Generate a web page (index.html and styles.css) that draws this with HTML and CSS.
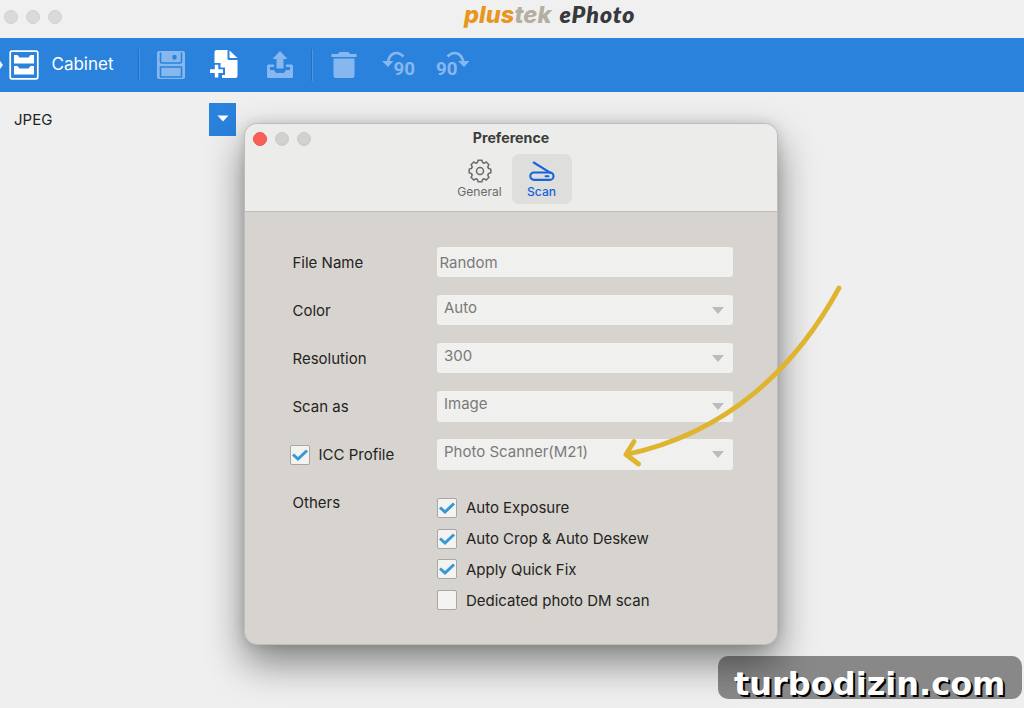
FILE: index.html
```html
<!DOCTYPE html>
<html lang="en">
<head>
<meta charset="utf-8">
<title>plustek ePhoto</title>
<link rel="stylesheet" href="styles.css">
</head>
<body>
<div class="app">
  <header class="titlebar">
    <div class="lights"><i></i><i></i><i></i></div>
    <div class="logo"><span class="plus">plus</span><span class="tek">tek</span><span class="ephoto">ePhoto</span></div>
  </header>
  <nav class="toolbar">
    <svg class="nub" width="3" height="10" viewBox="0 0 3 10"><path d="M0 1l3 4-3 4z" fill="#fff"/></svg>
    <svg class="ic cabinet" width="30" height="30" viewBox="0 0 30 30"><rect x="1.200" y="1.200" width="27.600" height="27.600" rx="1.800" fill="none" stroke="#fff" stroke-width="1.700"/><path d="M5 5h3.500l2 2.500h9l2-2.500H25v8.500H5zM5 16h3.500l2 2.500h9l2-2.500H25v8.500H5z" fill="#fff"/></svg>
    <span class="cabinet-label">Cabinet</span>
    <span class="divider d1"></span>
    <svg class="ic dim save" width="28" height="28" viewBox="0 0 28 28"><rect width="28" height="28" rx="2"/><path d="M3.500 1.500v9q0 1.500 1.500 1.500h18q1.500 0 1.500-1.500v-9M3.500 26V16h21v10z" fill="none" stroke="#2a82dd" stroke-width="1.600"/><rect x="15.500" y="4" width="4" height="4.500" rx="1.200" fill="#2a82dd"/></svg>
    <svg class="ic add" width="30" height="31" viewBox="0 0 30 31"><path d="M8 1h10.500v8.500q0 1.500 1.500 1.500h8.500V27q0 2-2 2H13v-3h3v-7.500h-4.500V14H5.500V3Q5.500 1 8 1zM20.500 1.500L28.500 9h-8z" fill="#fff"/><path d="M5.800 15.700h3.500v4.600H14v3.600H9.300v4.500H5.800v-4.500H1v-3.600h4.800z" fill="#fff"/></svg>
    <svg class="ic dim upload" width="28" height="28" viewBox="0 0 28 28"><path d="M14 0l7.500 8h-4v9.500h-7V8h-4z"/><path d="M2.500 13.500H8v2.500H4v3h4l2 3h8l2-3h4v-3h-4v-2.500h5.500q1.500 0 1.500 1.500v10.500q0 1.500-1.500 1.500h-23Q1 27 1 25.500V15q0-1.500 1.500-1.500z"/></svg>
    <span class="divider d2"></span>
    <svg class="ic dim trash" width="26" height="27" viewBox="0 0 26 27"><path d="M7 2l1.500-2h9L19 2h6.500v3H.5V2zM2.500 6.500h21v17q0 2.500-2.500 2.500H5q-2.500 0-2.500-2.500z"/></svg>
    <svg class="ic dim rot-left" width="34" height="26" viewBox="0 0 34 26"><path d="M6 12C7 2 15-1 21.500 5.500" class="arc"/><path d="M0 10h11.500L6 16z"/><text x="11.500" y="23.500" textLength="21.500" lengthAdjust="spacingAndGlyphs">90</text></svg>
    <svg class="ic dim rot-right" width="34" height="26" viewBox="0 0 34 26"><path d="M11.500 5.500C18-1 26 2 27.500 12" class="arc"/><path d="M22 10h11.500L28 16z"/><text x="0" y="23.500" textLength="21.500" lengthAdjust="spacingAndGlyphs">90</text></svg>
  </nav>
  <main class="workspace">
    <div class="format"><span>JPEG</span><button class="drop" aria-label="Format"><svg width="12" height="7" viewBox="0 0 12 7"><path d="M.5.5h11L6 6.500z" fill="#fff"/></svg></button></div>
  </main>

  <section class="dialog">
    <header class="dialog-head">
      <div class="lights dialog-lights"><i class="red"></i><i></i><i></i></div>
      <h1>Preference</h1>
      <div class="tabs">
        <div class="tab">
          <svg width="26" height="26" viewBox="-13 -13 26 26" fill="none" stroke="#6c6c6b" stroke-width="1.500" stroke-linecap="round" stroke-linejoin="round">
            <defs><path id="tooth" d="M-3.370-8.130L-2.500-8.600L-1.900-10.800H1.900L2.500-8.600L3.370-8.130"/></defs>
            <use href="#tooth"/><use href="#tooth" transform="rotate(45)"/><use href="#tooth" transform="rotate(90)"/><use href="#tooth" transform="rotate(135)"/><use href="#tooth" transform="rotate(180)"/><use href="#tooth" transform="rotate(225)"/><use href="#tooth" transform="rotate(270)"/><use href="#tooth" transform="rotate(315)"/>
            <circle r="3.500"/>
          </svg>
          <span>General</span>
        </div>
        <div class="tab active">
          <svg width="26" height="26" viewBox="0 0 26 26" fill="none" stroke="#1763dc" stroke-width="2.100" stroke-linecap="round"><path d="M4.700 4.500L21.500 14.800"/><rect x="1.300" y="14.500" width="23.200" height="7.400" rx="3.700"/><path d="M16.500 18.200h3" stroke-width="1.900"/></svg>
          <span>Scan</span>
        </div>
      </div>
    </header>
    <div class="form">
      <div class="row"><label>File Name</label><div class="field plain">Random</div></div>
      <div class="row"><label>Color</label><div class="field"><span>Auto</span><i class="caret"></i></div></div>
      <div class="row"><label>Resolution</label><div class="field"><span>300</span><i class="caret"></i></div></div>
      <div class="row"><label>Scan as</label><div class="field"><span>Image</span><i class="caret"></i></div></div>
      <div class="row"><label class="with-check"><span class="check"><svg width="18" height="16" viewBox="0 0 18 16"><path d="M2 7.500L7 12 16 3.500"/></svg></span><span>ICC Profile</span></label><div class="field"><span>Photo Scanner(M21)</span><i class="caret"></i></div></div>
      <div class="row others"><label>Others</label>
        <div class="checks">
          <div class="opt"><span class="check"><svg width="18" height="16" viewBox="0 0 18 16"><path d="M2 7.500L7 12 16 3.500"/></svg></span><span>Auto Exposure</span></div>
          <div class="opt"><span class="check"><svg width="18" height="16" viewBox="0 0 18 16"><path d="M2 7.500L7 12 16 3.500"/></svg></span><span>Auto Crop &amp; Auto Deskew</span></div>
          <div class="opt"><span class="check"><svg width="18" height="16" viewBox="0 0 18 16"><path d="M2 7.500L7 12 16 3.500"/></svg></span><span>Apply Quick Fix</span></div>
          <div class="opt"><span class="check"></span><span>Dedicated photo DM scan</span></div>
        </div>
      </div>
    </div>
  </section>

  <svg class="arrow" width="230" height="190" viewBox="615 280 230 190" fill="none" stroke="#dfb42f" stroke-width="4.800" stroke-linecap="round" stroke-linejoin="round"><path d="M839 288C796 367 728 433 626 454.500M634 441.500L626 454.500L638.500 464"/></svg>
  <div class="watermark">turbodizin.com</div>
</div>
</body>
</html>
```
FILE: styles.css
```css
* { box-sizing: border-box; }
body { margin: 0; }
.app {
  position: relative;
  width: 1024px;
  height: 708px;
  overflow: hidden;
  background: #efefef;
  font-family: Inter, "Liberation Sans", sans-serif;
  color: #242322;
}
.titlebar { display: flex; height: 38px; padding: 0 0 0 4px; background: #f0f0f0; }
.lights { display: flex; gap: 8px; }
.titlebar .lights { width: 460px; padding-top: 10px; }
.lights i { width: 14px; height: 14px; border-radius: 50%; background: #dadada; border: 1px solid #d0d0d0; }
.logo {
  display: flex;
  align-items: baseline;
  height: 30px;
  line-height: 28px;
  white-space: nowrap;
  font-style: italic;
}
.plus, .tek { font-size: 23.5px; font-weight: 800; letter-spacing: 0.1px; }
.plus { color: #e8961e; }
.tek { color: #b5afa1; }
.ephoto { color: #38393c; font-family: Lato, sans-serif; font-size: 23px; font-weight: 800; letter-spacing: 1px; margin-left: 8px; }
.toolbar {
  display: flex;
  align-items: flex-start;
  height: 54px;
  background: #2a82dd;
}
.nub { margin-top: 22px; }
.ic { flex: none; display: block; overflow: visible; }
.dim { fill: #87b7ef; }
.cabinet { margin: 12px 0 0 6px; }
.cabinet-label { width: 87px; padding-left: 12.5px; color: #fff; font-size: 17px; line-height: 52px; }
.divider { width: 2px; height: 32px; margin-top: 11px; border-left: 1px solid #2170c4; border-right: 1px solid #4b96e4; }
.d1 { margin-left: 12px; }
.save { margin: 13px 0 0 17px; }
.add { margin: 11px 0 0 24px; }
.upload { margin: 13px 0 0 27px; }
.d2 { margin-left: 17px; }
.trash { margin: 14px 0 0 18px; }
.rot-left { margin: 13px 0 0 25px; }
.rot-right { margin: 13px 0 0 20px; }
.arc { fill: none; stroke: #87b7ef; stroke-width: 2.6; }
.ic text { font: 700 19px Roboto, sans-serif; }
.format { display: flex; justify-content: space-between; width: 236px; padding: 11px 0 0 14px; font-size: 15px; line-height: 34px; }
.drop { display: flex; align-items: center; justify-content: center; width: 27px; height: 33px; padding: 0 0 3px; border: 0; background: #2a82dd; }
.dialog {
  position: absolute;
  left: 244px;
  top: 123px;
  width: 534px;
  height: 522px;
  border-radius: 13px;
  border: 1px solid #bdbcba;
  background: #d7d3cf;
  box-shadow: 0 18px 38px rgba(0,0,0,.46), 0 0 12px rgba(0,0,0,.12);
}
.dialog-head { position: relative; height: 88px; background: #ececea; border-radius: 12px 12px 0 0; border-bottom: 1px solid #bfbcb9; }
.dialog-lights { position: absolute; left: 7.5px; top: 8px; }
.dialog-lights i { background: #d1d1cf; border-color: #c9c9c7; }
.dialog-lights .red { background: #f95f57; border-color: #ee554e; }
h1 { margin: 0; padding-top: 4px; font-size: 14.2px; line-height: 20px; font-weight: 650; text-align: center; color: #3c3c3b; }
.tabs { display: flex; justify-content: center; gap: 2px; padding: 6px 1px 0 0; }
.tab { width: 60px; height: 50px; padding-top: 4px; border-radius: 7px; font-size: 12.1px; line-height: 15px; color: #6b6b6a; display: flex; flex-direction: column; align-items: center; }
.active { background: #dededc; color: #1763dc; font-weight: 500; }
.form { padding: 34.5px 0 0 47.5px; font-size: 15px; }
.row { display: flex; height: 30px; margin-bottom: 18.2px; }
.row > label { width: 144.5px; line-height: 32px; }
.field { position: relative; width: 296px; height: 30.5px; padding-left: 7px; border-radius: 3px; background: #f0f0ef; color: #7b7a79; line-height: 25px; }
.plain { padding-left: 2.5px; line-height: 31px; }
.caret { position: absolute; right: 9px; top: 12px; border: 6px solid transparent; border-top: 7px solid #bdbcbb; border-bottom: 0; }
.row > .with-check { display: flex; align-items: center; padding-top: 1px; }
.check { display: flex; align-items: center; justify-content: center; flex: none; width: 20px; height: 20px; border: 1px solid #a9a6a3; border-radius: 2px; background: #f3f3f2; }
.check path { fill: none; stroke: #3799d3; stroke-width: 3; }
.with-check .check { margin: 0 9px 0 -3px; }
.others { height: auto; margin: 0; }
.checks { padding-top: 10.5px; }
.opt { display: flex; align-items: center; gap: 9px; height: 20px; margin-bottom: 10.7px; line-height: 20px; letter-spacing: -0.02px; white-space: nowrap; }
.opt > span:last-child:not(.check) { padding-top: 1px; }
.arrow { position: absolute; left: 615px; top: 280px; }
.watermark {
  position: absolute;
  left: 718px;
  top: 656px;
  width: 304px;
  height: 43px;
  padding-left: 16px;
  border-radius: 10px;
  background: rgba(0,0,0,.43);
  color: #fff;
  font: 700 32px/56px "DejaVu Sans", sans-serif;
  text-shadow: 2px 2px 0 #000;
  white-space: nowrap;
}
```
